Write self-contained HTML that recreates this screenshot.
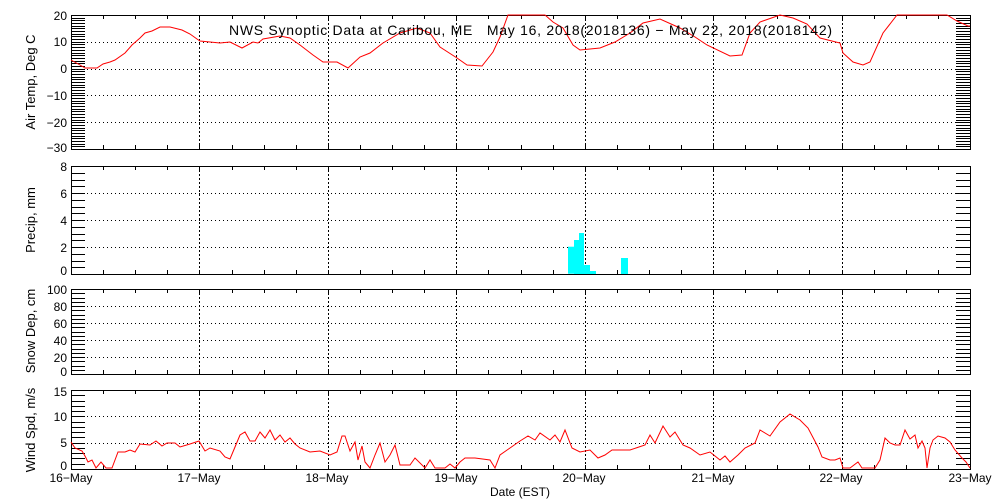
<!DOCTYPE html>
<html><head><meta charset="utf-8"><style>
html,body{margin:0;padding:0;background:#fff;}
svg{display:block;font-family:"Liberation Sans",sans-serif;font-size:12px;}
</style></head><body>
<svg id="s" width="1000" height="500" viewBox="0 0 1000 500" xmlns="http://www.w3.org/2000/svg">
<rect width="1000" height="500" fill="#fff"/>
<g id="g"></g>
<g fill="#00ffff">
<rect x="568" y="246.7" width="6" height="27"/>
<rect x="574" y="240" width="5" height="34"/>
<rect x="579" y="233" width="5" height="41"/>
<rect x="584" y="265" width="6" height="9"/>
<rect x="590" y="271" width="6" height="3"/>
<rect x="621" y="258" width="7" height="16"/>
</g>
<polyline fill="none" stroke="#f00" stroke-width="1" points="71,60 80,65 85,68 97,68 103,64 110,62 115,60 125,53 132,45 140,38 145,33 152,31 160,27 170,27 182,30 190,34 197,39 200,41 220,43 230,42 242,48 253,42 258,43 263,39 280,36 290,38 300,45 313,55 323,62 337,62 348,68 360,57 370,53 383,43 400,33 417,28 430,33 440,47 457,58 467,65 482,66 493,52 500,37 508,15 545,15 553,22 563,28 573,45 580,50 600,48 615,42 630,33 643,23 660,19 680,28 695,37 707,45 730,56 742,55 750,33 760,22 780,15 793,18 807,24 820,38 840,43 843,53 853,62 863,65 870,62 883,33 897,15 947,15 957,21 968,26 970,26"/>
<polyline fill="none" stroke="#f00" stroke-width="1" points="71,442 75,448 82,451 85,456 88,462 92,460 96,468 101,462 106,468 112,468 118,452 125,452 130,450 135,452 140,444 150,445 156,441 162,446 167,443 175,443 180,447 190,444 199,441 205,451 210,448 220,451 225,457 230,459 235,447 240,435 245,432 250,441 255,441 260,432 265,438 270,430 275,440 280,435 285,442 290,438 295,444 300,448 310,452 320,451 330,455 337,452 342,436 345,436 350,451 355,442 358,460 362,446 365,462 370,468 375,455 380,443 385,462 390,455 395,445 400,465 410,465 415,458 425,468 430,460 435,468 445,468 450,464 455,468 460,462 465,458 475,458 490,460 495,468 500,455 510,448 520,441 528,436 535,440 540,433 550,440 555,435 560,442 565,430 572,448 580,452 590,450 598,458 605,455 612,450 630,450 645,445 650,435 655,443 663,426 670,437 675,432 683,445 690,448 700,455 710,452 720,460 725,456 730,462 738,455 745,448 755,443 760,430 770,436 780,422 790,414 800,420 808,428 818,447 822,457 830,460 835,460 840,458 843,468 850,468 858,462 862,468 875,468 880,460 885,438 890,443 895,445 900,445 905,430 910,439 915,435 918,448 922,441 925,448 927,468 930,448 933,440 938,436 945,438 950,442 955,450 962,458 966,462 970,468"/>
<g fill="#000" text-anchor="end">
<text x="67" y="20">20</text><text x="67" y="46">10</text><text x="67" y="73">0</text><text x="67" y="100">−10</text><text x="67" y="127">−20</text><text x="67" y="152">−30</text>
<text x="67" y="171">8</text><text x="67" y="198">6</text><text x="67" y="225">4</text><text x="67" y="252">2</text><text x="67" y="275">0</text>
<text x="67" y="294">100</text><text x="67" y="311">80</text><text x="67" y="328">60</text><text x="67" y="345">40</text><text x="67" y="362">20</text><text x="67" y="376">0</text>
<text x="67" y="396">15</text><text x="67" y="421">10</text><text x="67" y="447">5</text><text x="67" y="470">0</text>
</g>
<g fill="#000" text-anchor="middle">
<text x="71" y="482">16−May</text><text x="199" y="482">17−May</text><text x="327" y="482">18−May</text><text x="456" y="482">19−May</text><text x="584" y="482">20−May</text><text x="713" y="482">21−May</text><text x="841" y="482">22−May</text><text x="970" y="482">23−May</text>
<text x="520" y="496">Date (EST)</text>
<text transform="translate(35,82) rotate(-90)" font-size="13">Air Temp, Deg C</text>
<text transform="translate(35,220) rotate(-90)" font-size="13">Precip, mm</text>
<text transform="translate(35,331) rotate(-90)" font-size="13">Snow Dep, cm</text>
<text transform="translate(35,430) rotate(-90)" font-size="13">Wind Spd, m/s</text>
</g>
<text x="229" y="35" font-size="14" textLength="603" lengthAdjust="spacing" xml:space="preserve">NWS Synoptic Data at Caribou, ME   May 16, 2018(2018136) − May 22, 2018(2018142)</text>
</svg>
<script>
(function(){
var g=document.getElementById('g'),h='';
var X0=71,X1=970;
var P=[[15,149,20,-30,1,[10,0,-10,-20]],[166,274,8,0,0.5,[6,4,2]],[289,374,100,0,5,[80,60,40,20]],[390,469,15,0,1,[10,5]]];
function L(a,b,c,d,ex){h+='<line x1="'+a+'" y1="'+b+'" x2="'+c+'" y2="'+d+'" stroke="#000" stroke-width="1" '+(ex||'')+'/>';}
P.forEach(function(p){
 var t=p[0],b=p[1],vmax=p[2],vmin=p[3],st=p[4];
 function Y(v){return t+(vmax-v)/(vmax-vmin)*(b-t);}
 for(var v=vmin;v<=vmax+1e-6;v+=st){var y=Math.round(Y(v))+0.5;L(X0,y,X0+14,y);L(X1-14,y,X1,y);}
 p[5].forEach(function(v){var y=Math.round(Y(v))+0.5;L(X0,y,X1,y,'stroke-dasharray="1,3"');});
 for(var d=1;d<7;d++){var x=Math.round(X0+d*(X1-X0)/7)+0.5;L(x,t,x,b,'stroke-dasharray="2,2"');}
 for(var q=1;q<28;q++){var x=Math.round(X0+q*(X1-X0)/28)+0.5;L(x,t,x,t+4);L(x,b-4,x,b);}
 h+='<rect x="'+(X0+0.5)+'" y="'+(t+0.5)+'" width="'+(X1-X0)+'" height="'+(b-t)+'" fill="none" stroke="#000" stroke-width="1"/>';
});
g.innerHTML=h;
})();
</script>
</body></html>
